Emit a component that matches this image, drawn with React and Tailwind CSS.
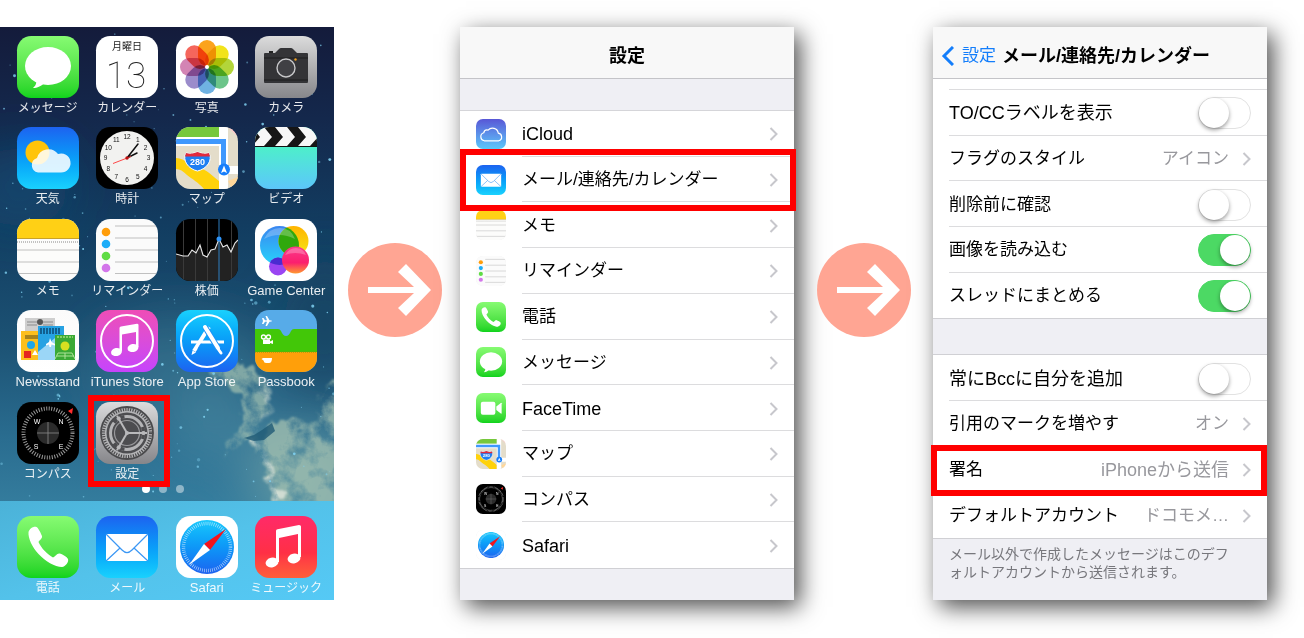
import { useId, useState } from 'react';
import clsx from 'clsx';

/* ---------- icon drawings, all on a 62 x 62 field ---------- */

function Tile({ className, children }) {
  return (
    <svg viewBox="0 0 62 62" aria-hidden="true" className={clsx('block size-full rounded-[23%]', className)}>
      {children}
    </svg>
  );
}

function MessagesIcon() {
  return (
    <Tile className="bg-linear-to-b from-[#86fb72] to-[#0cd31c]">
      <ellipse cx="31" cy="30" rx="23" ry="19" fill="#fff" />
      <path d="M19 44 C20 48 18 50 16 52 C20 52 25 50 28 46 Z" fill="#fff" />
    </Tile>
  );
}

function CalendarIcon() {
  return (
    <Tile className="bg-white">
      <text x="31" y="14" textAnchor="middle" fontSize="10" fill="#222" className="font-['Noto_Sans_CJK_JP',sans-serif]">月曜日</text>
      <text x="30" y="52" textAnchor="middle" fontSize="37" fill="#222" className="font-['Roboto',sans-serif] font-thin">13</text>
    </Tile>
  );
}

const PETALS = ['#fba31c', '#f2e31b', '#b3d53a', '#6cc58a', '#6fb2e2', '#9b8ccb', '#d384b4', '#f5665c'];

function PhotosIcon() {
  return (
    <Tile className="bg-white">
      {PETALS.map((color, i) => (
        <rect key={color} x="22" y="4" width="18" height="26" rx="9" fill={color} transform={`rotate(${i * 45} 31 31)`} className="mix-blend-multiply" />
      ))}
      <circle cx="31" cy="31" r="2" fill="#fff" />
    </Tile>
  );
}

function CameraIcon() {
  return (
    <Tile className="bg-linear-to-b from-[#dcdcdc] to-[#87878b]">
      <path d="M10 17 H20 L24 13 Q25 12 26 12 H36 Q37 12 38 13 L42 17 H52 Q53 17 53 18 V46 Q53 47 52 47 H10 Q9 47 9 46 V18 Q9 17 10 17 Z" fill="#343437" />
      <rect x="14" y="15" width="4" height="2" fill="#222" />
      <path d="M9 22 H53 M9 44 H53" stroke="#1d1d1f" strokeWidth="1" />
      <circle cx="31" cy="32" r="9" fill="#404044" stroke="#c8c8ca" strokeWidth="1.400" />
      <circle cx="40.500" cy="23.500" r="1.200" fill="#f0a020" />
    </Tile>
  );
}

function WeatherIcon() {
  return (
    <Tile className="bg-linear-to-b from-[#1d62f0] to-[#1ad1fd]">
      <circle cx="20.500" cy="25.500" r="12" fill="#ffc40a" />
      <path d="M21 45.500 A7.500 7.500 0 0 1 20 31 A12 12 0 0 1 41 27 A9.500 9.500 0 1 1 44 45.500 Z" fill="#fff" fillOpacity=".86" />
    </Tile>
  );
}

function ClockIcon() {
  return (
    <Tile className="bg-black">
      <circle cx="31" cy="31" r="27" fill="#f2f2f0" />
      {Array.from({ length: 12 }, (_, i) => {
        const a = ((i + 1) * Math.PI) / 6;
        return (
          <text key={i} x={31 + 21.5 * Math.sin(a)} y={33.3 - 21.5 * Math.cos(a)} textAnchor="middle" fontSize="6.5" fill="#111" className="font-['Liberation_Sans',sans-serif]">
            {i + 1}
          </text>
        );
      })}
      <path d="M31 31 L41 26 M31 31 L42 17" stroke="#111" strokeWidth="1.500" strokeLinecap="round" />
      <path d="M35 29.500 L17 36.500" stroke="#f33" strokeWidth=".9" />
      <circle cx="31" cy="31" r="1.700" fill="#b11" />
    </Tile>
  );
}

function MapsIcon() {
  return (
    <Tile className="bg-[#e4ddca]">
      <path d="M0 0 H43 V10 H0 Z" fill="#76c83c" />
      <path d="M52 0 H62 V10 Z" fill="#ffc4ca" />
      <path d="M0 31 C10 31 14 40 22 41 C31 42 36 49 43 54 V62 H28 C22 55 16 52 11 48 C7 44 4 42 0 42 Z" fill="#ffd20a" />
      <path d="M52 54 L62 50 V62 H56 Z" fill="#ffd79a" />
      <path d="M0 10 H43 V0 H52 V39 H62 V47 H52 V62 H43 V19 H0 Z" fill="#fff" />
      <path d="M0 14.500 H47.500 V42" fill="none" stroke="#3f98fd" strokeWidth="5" />
      <circle cx="48" cy="42.500" r="6" fill="#177efb" />
      <path d="M48 38.500 L51 46 L48 44.500 L45 46 Z" fill="#fff" />
      <path d="M10 26 Q15 28 21.500 25 Q28 28 33 26 C37 33 31 42 21.500 44 C12 42 6 33 10 26 Z" fill="#1f7ff2" stroke="#fff" strokeWidth="1" />
      <path d="M10 26 Q15 28 21.500 25 Q28 28 33 26 L34 29.500 H9 Z" fill="#e32a3c" />
      <text x="21.500" y="37.500" textAnchor="middle" fontSize="9" fill="#fff" className="font-['Liberation_Sans',sans-serif] font-bold">280</text>
    </Tile>
  );
}

function VideosIcon() {
  return (
    <Tile className="bg-linear-to-b from-[#4df0c8] from-30% to-[#5cc6fa]">
      <rect width="62" height="20" fill="#f7f7f7" />
      {[-14, 9, 32, 55].map((x) => (
        <path key={x} d={`M${x} 0 H${x + 11} L${x + 19} 10 H${x + 8} Z M${x} 19 H${x + 11} L${x + 19} 10 H${x + 8} Z`} fill="#161616" />
      ))}
      <path d="M0 19.500 H62" stroke="#111" strokeWidth="1" />
    </Tile>
  );
}

function NotesIcon() {
  return (
    <Tile className="bg-[#fcfcfb]">
      <rect width="62" height="19" fill="#ffd015" />
      <path d="M0 19.500 H62" stroke="#c9a227" strokeWidth="1" />
      <path d="M0 23 H62" stroke="#888" strokeWidth="1" strokeDasharray="1 1" />
      <path d="M0 31 H62 M0 43 H62 M0 54.500 H62" stroke="#c0c0c0" strokeWidth="1.200" />
    </Tile>
  );
}

function RemindersIcon() {
  return (
    <Tile className="bg-[#fbfbfb]">
      {['#ff9d0a', '#1cadf8', '#5fdc45', '#d376ea'].map((color, i) => (
        <circle key={color} cx="10" cy={13 + i * 12} r="4.300" fill={color} />
      ))}
      <path d="M19 7 H62 M19 19 H62 M19 31 H62 M19 43 H62 M19 54.500 H62" stroke="#c0c0c0" strokeWidth="1.200" />
    </Tile>
  );
}

const STOCK_LINE = '0,35 7,37 12,37 16,31 20,34 24,26 27,36 31,38 35,31 39,30 43,20 47,28 51,26 55,33 59,24 62,21';

function StocksIcon() {
  return (
    <Tile className="bg-black">
      <polygon points={`0,62 ${STOCK_LINE} 62,62`} fill="#222" />
      <path d="M7.500 0 V62 M19.500 0 V62 M31.500 0 V62 M55.500 0 V62" stroke="#3a3a3a" strokeWidth="1" />
      <path d="M43 0 V62" stroke="#2f7fc0" strokeWidth="1" />
      <polyline points={STOCK_LINE} fill="none" stroke="#e8e8e8" strokeWidth="1.100" />
      <circle cx="43" cy="20" r="2.500" fill="#2f95fa" />
    </Tile>
  );
}

function GameCenterIcon() {
  const id = useId();
  return (
    <Tile className="bg-white">
      <defs>
        <linearGradient id={`${id}b`} x1="0" y1="0" x2="0" y2="1"><stop stopColor="#3a86f0" /><stop offset="1" stopColor="#27d4fb" /></linearGradient>
        <linearGradient id={`${id}y`} x1="0" y1="0" x2="0" y2="1"><stop stopColor="#ffb400" /><stop offset="1" stopColor="#f5e616" /></linearGradient>
        <linearGradient id={`${id}p`} x1="0" y1="0" x2="0" y2="1"><stop stopColor="#fb3a8c" /><stop offset=".6" stopColor="#fb1f6e" /><stop offset="1" stopColor="#ff9a30" /></linearGradient>
        <clipPath id={`${id}c`}><circle cx="24.500" cy="26.500" r="19.500" /></clipPath>
      </defs>
      <circle cx="24.500" cy="26.500" r="19.500" fill={`url(#${id}b)`} />
      <circle cx="38.500" cy="22" r="15" fill={`url(#${id}y)`} />
      <circle cx="38.500" cy="22" r="15" fill="#30a80c" clipPath={`url(#${id}c)`} />
      <circle cx="23" cy="47.500" r="9" fill="#9a45f2" />
      <circle cx="23" cy="47.500" r="9" fill="#4a2bd0" clipPath={`url(#${id}c)`} />
      <circle cx="40.500" cy="41" r="13.500" fill={`url(#${id}p)`} />
      <path d="M9 20 Q14 9 25 9 Q36 9 40 20 Q24 12 9 20 Z M30 36 Q34 29 41 29 Q48 29 51 36 Q40 32 30 36 Z" fill="#fff" fillOpacity=".25" />
    </Tile>
  );
}

function NewsstandIcon() {
  return (
    <Tile className="bg-linear-to-b from-[#fbfbfb] to-[#fff]">
      <rect x="8" y="8" width="30" height="26" fill="#cfcfcf" />
      <path d="M10 12 H20 M26 12 H36 M10 15 H20 M26 15 H36" stroke="#8b8b8b" strokeWidth="1" />
      <circle cx="23" cy="12" r="3" fill="#555" />
      <rect x="4" y="21" width="30" height="29" fill="#fdbf1d" />
      <rect x="8" y="25" width="14" height="4" fill="#a8831c" />
      <circle cx="14" cy="35" r="4" fill="#1ea6ea" />
      <rect x="7" y="41" width="7" height="7" fill="#e5261f" />
      <path d="M15 45 L18 40 L21 45 Z" fill="#fff" />
      <rect x="21" y="16" width="26" height="34" fill="#27a2e3" />
      <path d="M21 50 V42 L38 28 L47 34 V50 Z" fill="#9bd6f7" />
      <path d="M24 18 V24 M27 18 V24 M30 18 V24 M33 18 V24 M36 18 V24 M39 18 V24 M42 18 V24" stroke="#0d4e7b" strokeWidth="1.600" />
      <path d="M33 28 L34.500 32 L38 34 V35.500 L34.500 34.500 L34 37 H32.500 L32 34.500 L29 35.500 V34 L32 32 Z" fill="#fff" />
      <rect x="38" y="25" width="20" height="25" fill="#3aa935" />
      <path d="M40 27 H56" stroke="#9fdc7a" strokeWidth="1.500" strokeDasharray="2 1" />
      <circle cx="48" cy="36" r="4.500" fill="#d8e021" />
      <path d="M41 43 H55 L58 49 M41 43 L38 49 M48 43 V49 M40 46 H57" stroke="#b9e8a0" strokeWidth=".9" fill="none" />
    </Tile>
  );
}

function ITunesIcon() {
  return (
    <Tile className="bg-linear-to-b from-[#ef4db6] to-[#c643fc]">
      <circle cx="31" cy="31" r="26" fill="none" stroke="#fff" strokeWidth="2" />
      <path d="M23.500 18 Q23.500 17 25 16.600 L41 13.800 Q42.500 13.800 42.500 15 V37 H40 V22 L26 24.500 V41 H23.500 Z" fill="#fff" />
      <ellipse cx="20.500" cy="42" rx="5.500" ry="4" fill="#fff" transform="rotate(-12 20.500 42)" />
      <ellipse cx="37" cy="38" rx="5.500" ry="4" fill="#fff" transform="rotate(-12 37 38)" />
    </Tile>
  );
}

function AppStoreIcon() {
  return (
    <Tile className="bg-linear-to-b from-[#1ad1fd] to-[#1d62f0]">
      <circle cx="31" cy="31" r="26" fill="none" stroke="#fff" strokeWidth="2" />
      <path d="M15 32 H48" stroke="#fff" strokeWidth="3" />
      <path d="M33 17 L18 41" stroke="#fff" strokeWidth="4" />
      <path d="M29 17 L42.500 39" stroke="#1f93f7" strokeWidth="6" />
      <path d="M29 17 L42 38" stroke="#fff" strokeWidth="4" strokeLinecap="round" />
      <path d="M42.500 39.500 L45 43" stroke="#fff" strokeWidth="3" strokeLinecap="round" />
      <path d="M16.500 40.500 L20 42.500 L15.500 45 Z" fill="#fff" />
      <path d="M22 38.500 L25 33.500" stroke="#1f84f5" strokeWidth=".8" />
    </Tile>
  );
}

function PassbookIcon() {
  return (
    <Tile className="bg-[#57abe8]">
      <path d="M0 19 H23 Q25 19 26 21 Q28 26 31 26 Q34 26 36 21 Q37 19 39 19 H62 V42 H0 Z" fill="#42c708" />
      <path d="M0 42 H62 V62 H0 Z" fill="#ff9f0a" />
      <path d="M0 42 H62" stroke="#7a9a10" strokeWidth="1" strokeDasharray="1 1" />
      <path d="M7 8 L8.500 8 L10 10.300 L12 10.300 L10.500 6 L12 6 L14.500 10.300 Q17 10.300 17 11 Q17 11.700 14.500 11.700 L12 16 H10.500 L12 11.700 H10 L8.500 14 H7 L8 11 Z" fill="#fff" />
      <circle cx="8.500" cy="27" r="2" fill="none" stroke="#fff" strokeWidth="1.300" />
      <circle cx="13.500" cy="27" r="2" fill="none" stroke="#fff" strokeWidth="1.300" />
      <path d="M8 29.500 H15 V34 H8 Z M15 31.500 L18 30 V34 L15 33 Z" fill="#fff" />
      <path d="M8 48 H17 Q17 53 14 53 H11 Q9 53 8.500 50.500 L6.500 49 Z" fill="#fff" />
    </Tile>
  );
}

function CompassIcon() {
  return (
    <Tile className="bg-black">
      <circle cx="31" cy="31" r="24.500" fill="none" stroke="#9a9a9a" strokeWidth="4" strokeDasharray="1 1.566" />
      <circle cx="31" cy="31" r="11" fill="#2b2b2b" />
      <path d="M31 20 V42 M20 31 H42" stroke="#8a8a8a" strokeWidth=".8" />
      <path d="M51 9 L56 6 L55 12 Z" fill="#ff2d2d" />
      <g fontSize="7" fill="#fff" textAnchor="middle" className="font-['Liberation_Sans',sans-serif]">
        <text x="20" y="22">W</text>
        <text x="44" y="22">N</text>
        <text x="19" y="47">S</text>
        <text x="44" y="47">E</text>
      </g>
    </Tile>
  );
}

function SettingsIcon() {
  return (
    <Tile className="bg-linear-to-b from-[#dcdcdd] to-[#86868a]">
      <circle cx="31" cy="31" r="26" fill="#b4b4b6" stroke="#4a4a4c" strokeWidth="1.800" />
      <circle cx="31" cy="31" r="23.500" fill="none" stroke="#4a4a4c" strokeWidth="3" strokeDasharray="1.200 1.260" />
      <circle cx="31" cy="31" r="20.500" fill="#4d4d50" />
      <circle cx="31" cy="31" r="16.500" fill="none" stroke="#b4b4b6" strokeWidth="3" />
      <circle cx="31" cy="31" r="12.500" fill="#4d4d50" stroke="#98989b" strokeWidth="1.200" />
      {[0, 120, 240].map((deg) => (
        <g key={deg} transform={`rotate(${deg} 31 31)`}>
          <path d="M31 31 H51" stroke="#b9b9bb" strokeWidth="2" />
          <path d="M46.500 25 A16.500 16.500 0 0 1 47.500 29 M47.500 33 A16.500 16.500 0 0 1 46.500 37" fill="none" stroke="#4d4d50" strokeWidth="3.400" />
        </g>
      ))}
      <circle cx="31" cy="31" r="2" fill="#b9b9bb" />
    </Tile>
  );
}

function PhoneIcon() {
  return (
    <Tile className="bg-linear-to-b from-[#86fb72] to-[#0cd31c]">
      <path d="M11.500 16 C12.500 12.500 16.500 10 19.500 11 C21.500 12 24 17.500 25 20 C25.500 22.500 22.500 24 21.500 26 C24 32 31 39 36 41.500 C38.500 40.500 40 37 42.500 37.500 C45.500 38 50 41 51 43 C52 46 48.500 50.500 45 51 C38 51 28 45 21.500 38 C15 31 11 22 11.500 16 Z" fill="#fff" />
    </Tile>
  );
}

function MailIcon() {
  return (
    <Tile className="bg-linear-to-b from-[#1d62f0] to-[#1ad1fd]">
      <rect x="10" y="18" width="42" height="27" rx="1" fill="#fff" />
      <path d="M10 18 L26 34 Q31 39 36 34 L52 18 M10 45 L24 32 M52 45 L38 32" fill="none" stroke="#3b97f4" strokeWidth="1.200" />
    </Tile>
  );
}

function SafariIcon() {
  return (
    <Tile className="bg-white">
      <foreignObject x="4" y="4" width="54" height="54">
        <div className="size-full rounded-full bg-linear-to-b from-[#1bc8fc] to-[#1d62f0]" />
      </foreignObject>
      <circle cx="31" cy="31" r="23.500" fill="none" stroke="#fff" strokeOpacity=".65" strokeWidth="3.500" strokeDasharray=".7 1.350" />
      <path d="M50 13 L34 34 L28 28 Z" fill="#f5141c" />
      <path d="M13 49 L28 28 L34 34 Z" fill="#fff" />
    </Tile>
  );
}

function MusicIcon() {
  return (
    <Tile className="bg-linear-to-b from-[#ff2a68] via-[#ff2f45] via-60% to-[#ff5e3a]">
      <path d="M21 15 Q21 13.500 22.500 13.200 L44 9 Q46 9 46 10.500 V41 H43 V18 L24 22 V46 H21 Z" fill="#fff" />
      <ellipse cx="17" cy="46.500" rx="6.500" ry="4.800" fill="#fff" transform="rotate(-12 17 46.500)" />
      <ellipse cx="39" cy="42.500" rx="6.500" ry="4.800" fill="#fff" transform="rotate(-12 39 42.500)" />
    </Tile>
  );
}

function ICloudIcon() {
  return (
    <Tile className="bg-linear-to-b from-[#5856d6] to-[#5ac8fa]">
      <path d="M17 45 A8.500 8.500 0 0 1 16 28.500 A7.500 7.500 0 0 1 25 23 A12 12 0 0 1 46 29 A8.200 8.200 0 0 1 47 45 Z" fill="none" stroke="#fff" strokeWidth="2.500" />
    </Tile>
  );
}

function FaceTimeIcon() {
  return (
    <Tile className="bg-linear-to-b from-[#86fb72] to-[#0cd31c]">
      <rect x="10" y="18" width="30" height="27" rx="4" fill="#fff" />
      <path d="M42 28 L52 20 Q53 20 53 21 V42 Q53 43 52 43 L42 35 Z" fill="#fff" />
    </Tile>
  );
}

/* ---------- shared pieces ---------- */

function Chevron() {
  return (
    <svg viewBox="0 0 9 14" aria-hidden="true" className="h-[14px] w-[9px] shrink-0">
      <path d="M1.500 1 L7.500 7 L1.500 13" fill="none" stroke="#c7c7cc" strokeWidth="2" />
    </svg>
  );
}

// latin letters run a size larger than the kana beside them
const textSize = (text) => (/[A-Za-z]/.test(text) ? 'text-[18px]' : 'text-[17px]');

// red frame that marks where to tap
function Marker({ className }) {
  return <span className={clsx('pointer-events-none absolute z-10 border-[6px] border-[#f00]', className)} />;
}

function StepArrow({ className }) {
  return (
    <div className={clsx('flex shrink-0 items-center', className)}>
      <svg viewBox="0 0 94 94" aria-hidden="true" className="mt-[-48px] size-[94px]">
        <circle cx="47" cy="47" r="47" fill="#ffa593" />
        <path d="M20 44 H66 L50 29 L58 21 L83 47 L58 73 L50 65 L66 50 H20 Z" fill="#fff" />
      </svg>
    </div>
  );
}

function Panel({ children }) {
  return (
    <section className="flex min-w-0 flex-1 flex-col bg-[#efeff4] shadow-[6px_7px_22px_rgba(0,0,0,0.7)]">
      {children}
    </section>
  );
}

/* ---------- home screen ---------- */

const APPS = [
  { label: 'メッセージ', icon: MessagesIcon },
  { label: 'カレンダー', icon: CalendarIcon },
  { label: '写真', icon: PhotosIcon },
  { label: 'カメラ', icon: CameraIcon },
  { label: '天気', icon: WeatherIcon },
  { label: '時計', icon: ClockIcon },
  { label: 'マップ', icon: MapsIcon },
  { label: 'ビデオ', icon: VideosIcon },
  { label: 'メモ', icon: NotesIcon },
  { label: 'リマインダー', icon: RemindersIcon },
  { label: '株価', icon: StocksIcon },
  { label: 'Game Center', icon: GameCenterIcon, latin: true },
  { label: 'Newsstand', icon: NewsstandIcon, latin: true },
  { label: 'iTunes Store', icon: ITunesIcon, latin: true },
  { label: 'App Store', icon: AppStoreIcon, latin: true },
  { label: 'Passbook', icon: PassbookIcon, latin: true },
  { label: 'コンパス', icon: CompassIcon },
  { label: '設定', icon: SettingsIcon, marked: true },
];

const DOCK = [
  { label: '電話', icon: PhoneIcon },
  { label: 'メール', icon: MailIcon },
  { label: 'Safari', icon: SafariIcon, latin: true },
  { label: 'ミュージック', icon: MusicIcon },
];

function AppButton({ label, icon: Icon, latin, marked }) {
  return (
    <button type="button" className="relative flex flex-col items-center">
      <span className="size-[62px]"><Icon /></span>
      <span className={clsx('leading-5 whitespace-nowrap text-white/90', latin ? 'text-[13px]' : 'text-[12px]')}>{label}</span>
      {marked && <Marker className="-top-[7px] right-[-3px] bottom-[6px] left-0" />}
    </button>
  );
}

const STARS = Array.from({ length: 190 }, (_, i) => {
  const rand = (n) => {
    const v = Math.sin(i * 12.9898 + n * 78.233) * 43758.5453;
    return v - Math.floor(v);
  };
  return { x: rand(1) * 334, y: rand(2) * 480, r: 0.5 + rand(3) * rand(4) * 1.3, o: 0.35 + rand(5) * 0.6 };
});

function Wallpaper() {
  return (
    <svg viewBox="0 0 334 573" preserveAspectRatio="none" aria-hidden="true" className="absolute inset-0 size-full">
      <defs>
        <linearGradient id="sky" x1="0" y1="0" x2="0" y2="1">
          <stop stopColor="#141b3b" />
          <stop offset=".16" stopColor="#14284c" />
          <stop offset=".35" stopColor="#123d61" />
          <stop offset=".55" stopColor="#1c5274" />
          <stop offset=".72" stopColor="#2a6d90" />
          <stop offset=".83" stopColor="#347c9d" />
          <stop offset="1" stopColor="#3a8aa9" />
        </linearGradient>
        <filter id="cloud" x="-30%" y="-30%" width="160%" height="160%">
          <feTurbulence type="fractalNoise" baseFrequency=".05" numOctaves="5" seed="8" result="edge" />
          <feDisplacementMap in="SourceGraphic" in2="edge" scale="26" xChannelSelector="R" yChannelSelector="G" />
          <feGaussianBlur stdDeviation="1" result="shape" />
          <feTurbulence type="fractalNoise" baseFrequency=".045" numOctaves="5" seed="3" />
          <feColorMatrix values="0 0 0 0 1  0 0 0 0 1  0 0 0 0 1  3 0 0 0 -.8" result="grain" />
          <feComposite in="shape" in2="grain" operator="in" />
        </filter>
        <filter id="soft" x="-60%" y="-60%" width="220%" height="220%">
          <feGaussianBlur stdDeviation="24" />
        </filter>
      </defs>
      <rect width="334" height="573" fill="url(#sky)" />
      <g filter="url(#soft)">
        <ellipse cx="20" cy="160" rx="50" ry="40" fill="#145078" fillOpacity=".6" />
        <ellipse cx="180" cy="340" rx="90" ry="50" fill="#3f7f98" fillOpacity=".5" />
        <ellipse cx="325" cy="300" rx="40" ry="70" fill="#143f5e" fillOpacity=".6" />
        <ellipse cx="215" cy="400" rx="50" ry="40" fill="#4f8fa6" fillOpacity=".5" />
        <ellipse cx="300" cy="450" rx="50" ry="50" fill="#6a9ea4" fillOpacity=".8" />
      </g>
      <g filter="url(#cloud)">
        <path d="M185 320 Q235 330 262 350 Q274 375 264 396 L248 412 Q232 425 218 428 Q240 405 246 385 Q225 350 185 320 Z" fill="#a3c0b0" fillOpacity=".7" />
        <path d="M250 410 Q268 408 282 392 Q292 388 300 400 Q318 398 322 375 Q330 355 345 350 V495 H272 Q272 450 250 416 Z" fill="#a3c0b0" fillOpacity=".75" />
        <path d="M251 414 Q266 426 268 448 Q276 470 276 495" fill="none" stroke="#e0e6dc" strokeOpacity=".8" strokeWidth="4" />
        <path d="M262 350 Q274 375 264 396" fill="none" stroke="#d0dcd0" strokeOpacity=".6" strokeWidth="4" />
      </g>
      <path d="M244 411 L254 408 L262 403 L272 396 L275 404 L264 413 L254 414 Z" fill="#1f5a75" fillOpacity=".8" />
      {STARS.map((s, i) => (
        <circle key={i} cx={s.x} cy={s.y} r={s.r} fill="#7fd0f0" fillOpacity={s.o} />
      ))}
    </svg>
  );
}

function HomeScreen() {
  return (
    <section className="relative flex min-w-0 flex-1 flex-col overflow-hidden font-['Liberation_Sans','Noto_Sans_CJK_JP',sans-serif]">
      <Wallpaper />
      <div className="relative grid flex-1 grid-cols-4 grid-rows-5 px-2 pt-[9px] pb-2">
        {APPS.map((app) => <AppButton key={app.label} {...app} />)}
        <div className="absolute inset-x-0 bottom-2 flex justify-center gap-[9px] pr-2">
          <span className="size-2 rounded-full bg-white" />
          <span className="size-2 rounded-full bg-white/45" />
          <span className="size-2 rounded-full bg-white/45" />
        </div>
      </div>
      <div className="relative grid grid-cols-4 bg-linear-to-br from-[#4bb2d8] via-[#53c2ea] to-[#55c9f5] px-2 pt-[15px] pb-[2px]">
        {DOCK.map((app) => <AppButton key={app.label} {...app} />)}
      </div>
    </section>
  );
}

/* ---------- settings list ---------- */

const SETTINGS = [
  { label: 'iCloud', icon: ICloudIcon },
  { label: 'メール/連絡先/カレンダー', icon: MailIcon, marked: true },
  { label: 'メモ', icon: NotesIcon, pale: true },
  { label: 'リマインダー', icon: RemindersIcon, pale: true },
  { label: '電話', icon: PhoneIcon },
  { label: 'メッセージ', icon: MessagesIcon },
  { label: 'FaceTime', icon: FaceTimeIcon },
  { label: 'マップ', icon: MapsIcon },
  { label: 'コンパス', icon: CompassIcon },
  { label: 'Safari', icon: SafariIcon, pale: true },
];

function SettingsScreen() {
  return (
    <Panel>
      <header className="flex h-[52px] items-center justify-center border-b border-[#c4c4c8] bg-[#f8f8f8] pt-[6px]">
        <h2 className="text-[18px] font-bold">設定</h2>
      </header>
      <div className="h-8 border-b border-[#d5d5d9]" />
      <ul className="flex flex-1 flex-col bg-white">
        {SETTINGS.map(({ label, icon: Icon, pale, marked }) => (
          <li key={label} className="group relative flex flex-1">
            <button type="button" className="flex flex-1 items-stretch pl-4 text-left">
              <span className={clsx('size-[30px] self-center rounded-[7px]', pale && 'ring-1 ring-[#ededed] ring-inset')}><Icon /></span>
              <span className={clsx('ml-4 flex flex-1 items-center justify-between border-b border-[#dcdcde] pt-[2px] pr-4 group-last:border-transparent', textSize(label))}>
                {label}
                <Chevron />
              </span>
            </button>
            {marked && <Marker className="-top-2 -right-[2px] -bottom-[9px] left-0" />}
          </li>
        ))}
      </ul>
      <div className="h-8 border-t border-[#d0d0d4]" />
    </Panel>
  );
}

/* ---------- mail settings ---------- */

const DISPLAY_ROWS = [
  { label: 'TO/CCラベルを表示', on: false },
  { label: 'フラグのスタイル', value: 'アイコン' },
  { label: '削除前に確認', on: false },
  { label: '画像を読み込む', on: true },
  { label: 'スレッドにまとめる', on: true },
];

const COMPOSE_ROWS = [
  { label: '常にBccに自分を追加', on: false },
  { label: '引用のマークを増やす', value: 'オン' },
  { label: '署名', value: 'iPhoneから送信', marked: true },
  { label: 'デフォルトアカウント', value: 'ドコモメ…' },
];

function ToggleRow({ label, on }) {
  const id = useId();
  const [checked, setChecked] = useState(on);
  return (
    <>
      <label htmlFor={id} className={clsx('flex-1', textSize(label))}>{label}</label>
      <input
        id={id}
        type="checkbox"
        role="switch"
        checked={checked}
        onChange={(e) => setChecked(e.target.checked)}
        className="h-8 w-[53px] appearance-none rounded-full border border-[#e2e2e2] bg-white before:block before:size-[30px] before:rounded-full before:bg-white before:shadow-[0_2px_4px_rgba(0,0,0,0.4)] checked:border-[#4cd964] checked:bg-[#4cd964] checked:before:translate-x-[21px]"
      />
    </>
  );
}

function Row({ label, value, on, marked }) {
  return (
    <li className="group relative flex flex-1 pl-4">
      <div className="flex flex-1 items-center border-b border-[#dcdcde] pt-[2px] pr-4 group-last:border-transparent">
        {value ? (
          <button type="button" className="flex flex-1 items-center text-left">
            <span className={clsx('flex-1', textSize(label))}>{label}</span>
            <span className={clsx('mr-[13px] text-[#98989d]', textSize(value))}>{value}</span>
            <Chevron />
          </button>
        ) : (
          <ToggleRow label={label} on={on} />
        )}
      </div>
      {marked && <Marker className="-top-[2px] right-0 -bottom-1 -left-[2px]" />}
    </li>
  );
}

function MailScreen() {
  return (
    <Panel>
      <header className="flex h-[52px] items-center border-b border-[#c4c4c8] bg-[#f8f8f8] pt-[6px] pl-2">
        <button type="button" className="flex items-center gap-2 text-[17px] text-[#147efb]">
          <svg viewBox="0 0 13 20" aria-hidden="true" className="h-5 w-[13px]">
            <path d="M12 1 L3 10 L12 19" fill="none" stroke="currentColor" strokeWidth="3" />
          </svg>
          設定
        </button>
        <h2 className="ml-[6px] text-[18px] font-bold whitespace-nowrap">メール/連絡先/カレンダー</h2>
      </header>
      <div className="h-[11px] bg-white pl-4">
        <div className="h-full border-b border-[#dcdcde]" />
      </div>
      <ul className="flex flex-5 flex-col bg-white">
        {DISPLAY_ROWS.map((row) => <Row key={row.label} {...row} />)}
      </ul>
      <div className="h-[37px] border-y border-[#d0d0d4]" />
      <ul className="flex flex-4 flex-col bg-white">
        {COMPOSE_ROWS.map((row) => <Row key={row.label} {...row} />)}
      </ul>
      <p className="h-[62px] border-t border-[#d0d0d4] pt-[6px] pr-7 pl-4 text-[14px] leading-[18px] break-all text-[#77777c]">
        メール以外で作成したメッセージはこのデフォルトアカウントから送信されます。
      </p>
    </Panel>
  );
}

export default function App() {
  return (
    <main className="flex min-h-screen bg-white pt-[27px] pr-[37px] pb-[38px] font-['Liberation_Sans','Noto_Sans_CJK_JP',sans-serif] text-[18px] leading-6 text-black">
      <HomeScreen />
      <StepArrow className="w-[126px] pl-[14px]" />
      <SettingsScreen />
      <StepArrow className="w-[139px] pl-[23px]" />
      <MailScreen />
    </main>
  );
}
